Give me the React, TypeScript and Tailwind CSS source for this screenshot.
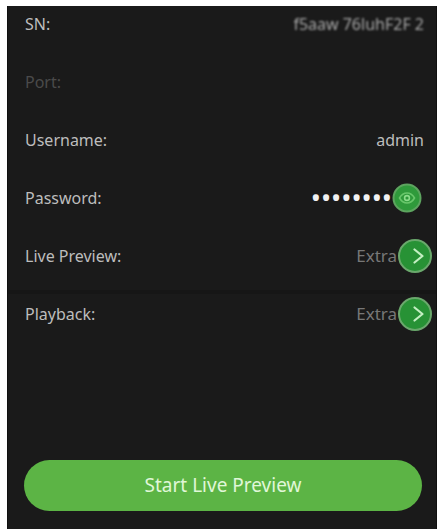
import { useState } from 'react'

const ROW = 'flex h-9 items-center justify-between pl-[17px]'
const LABEL = 'text-base text-[#bdbdbd]'

function StreamRow({ label, value }: { label: string; value: string }) {
  return (
    <div className={`${ROW} pr-[3px]`}>
      <span className={LABEL}>{label}</span>
      <button type="button" aria-label={`${label} ${value}`} className="flex items-center">
        <span className="text-[17px] text-[#777777]">{value}</span>
        <svg viewBox="0 0 36 36" className="size-9" aria-hidden="true">
          <circle cx="18" cy="18" r="16" fill="#279235" stroke="#6aa86c" strokeWidth="2" />
          <path
            d="M17.500 11.500l8 6.500-8 6.500"
            fill="none"
            stroke="#c3efc2"
            strokeWidth="2.200"
            strokeLinecap="round"
            strokeLinejoin="round"
          />
        </svg>
      </button>
    </div>
  )
}

export default function App() {
  const [username, setUsername] = useState('admin')
  const [password, setPassword] = useState('password')
  const [visible, setVisible] = useState(false)

  return (
    <div className="min-h-screen bg-white pt-1.5 pr-[3px] pb-px pl-[7px] font-['Noto_Sans',sans-serif]">
      <form
        onSubmit={(e) => e.preventDefault()}
        className="border-x border-[#101010] bg-[#1a1a1a] pb-[18px]"
      >
        <div className="flex flex-col gap-[22px] border-b-4 border-[#161616] pb-4">
          <div className={`${ROW} pr-3`}>
            <span className={LABEL}>SN:</span>
            <span className="text-base text-[#a8a8a8] blur-[1px]">f5aaw 76luhF2F 2</span>
          </div>

          <div className={ROW}>
            <span className="text-base text-[#4a4a4a]">Port:</span>
          </div>

          <div className={`${ROW} pr-3`}>
            <label htmlFor="username" className={LABEL}>
              Username:
            </label>
            <input
              id="username"
              value={username}
              onChange={(e) => setUsername(e.target.value)}
              className="w-40 bg-transparent text-right text-base text-[#bdbdbd] outline-none"
            />
          </div>

          <div className={`${ROW} pr-[14px]`}>
            <label htmlFor="password" className={LABEL}>
              Password:
            </label>
            <div className="flex items-center">
              <input
                id="password"
                type={visible ? 'text' : 'password'}
                value={password}
                onChange={(e) => setPassword(e.target.value)}
                className={`h-9 w-40 bg-transparent text-right text-[#f2f2f2] outline-none ${
                  visible ? 'text-base' : 'text-[27px]'
                }`}
              />
              <button
                type="button"
                aria-label={visible ? 'Hide password' : 'Show password'}
                onClick={() => setVisible(!visible)}
              >
                <svg viewBox="0 0 30 30" className="block size-[30px]" aria-hidden="true">
                  <circle cx="15" cy="15" r="13.500" fill="#2f9a3b" stroke="#5da45f" strokeWidth="2" />
                  <path
                    d="M7.500 15c2-3.400 4.600-5 7.500-5s5.500 1.600 7.500 5c-2 3.400-4.600 5-7.500 5s-5.500-1.600-7.500-5z"
                    fill="none"
                    stroke="#69c76b"
                    strokeWidth="1.600"
                  />
                  <circle cx="15" cy="15" r="2.400" fill="none" stroke="#8bdc8a" strokeWidth="1.600" />
                </svg>
              </button>
            </div>
          </div>

          <StreamRow label="Live Preview:" value="Extra" />
        </div>

        <div className="pt-0.5">
          <StreamRow label="Playback:" value="Extra" />
        </div>

        <div className="mt-32 pr-[14px] pl-4">
          <button
            type="submit"
            className="h-[51px] w-full rounded-full bg-[#5cb445] text-[19px] text-[#e0f7d8]"
          >
            Start Live Preview
          </button>
        </div>
      </form>
    </div>
  )
}
